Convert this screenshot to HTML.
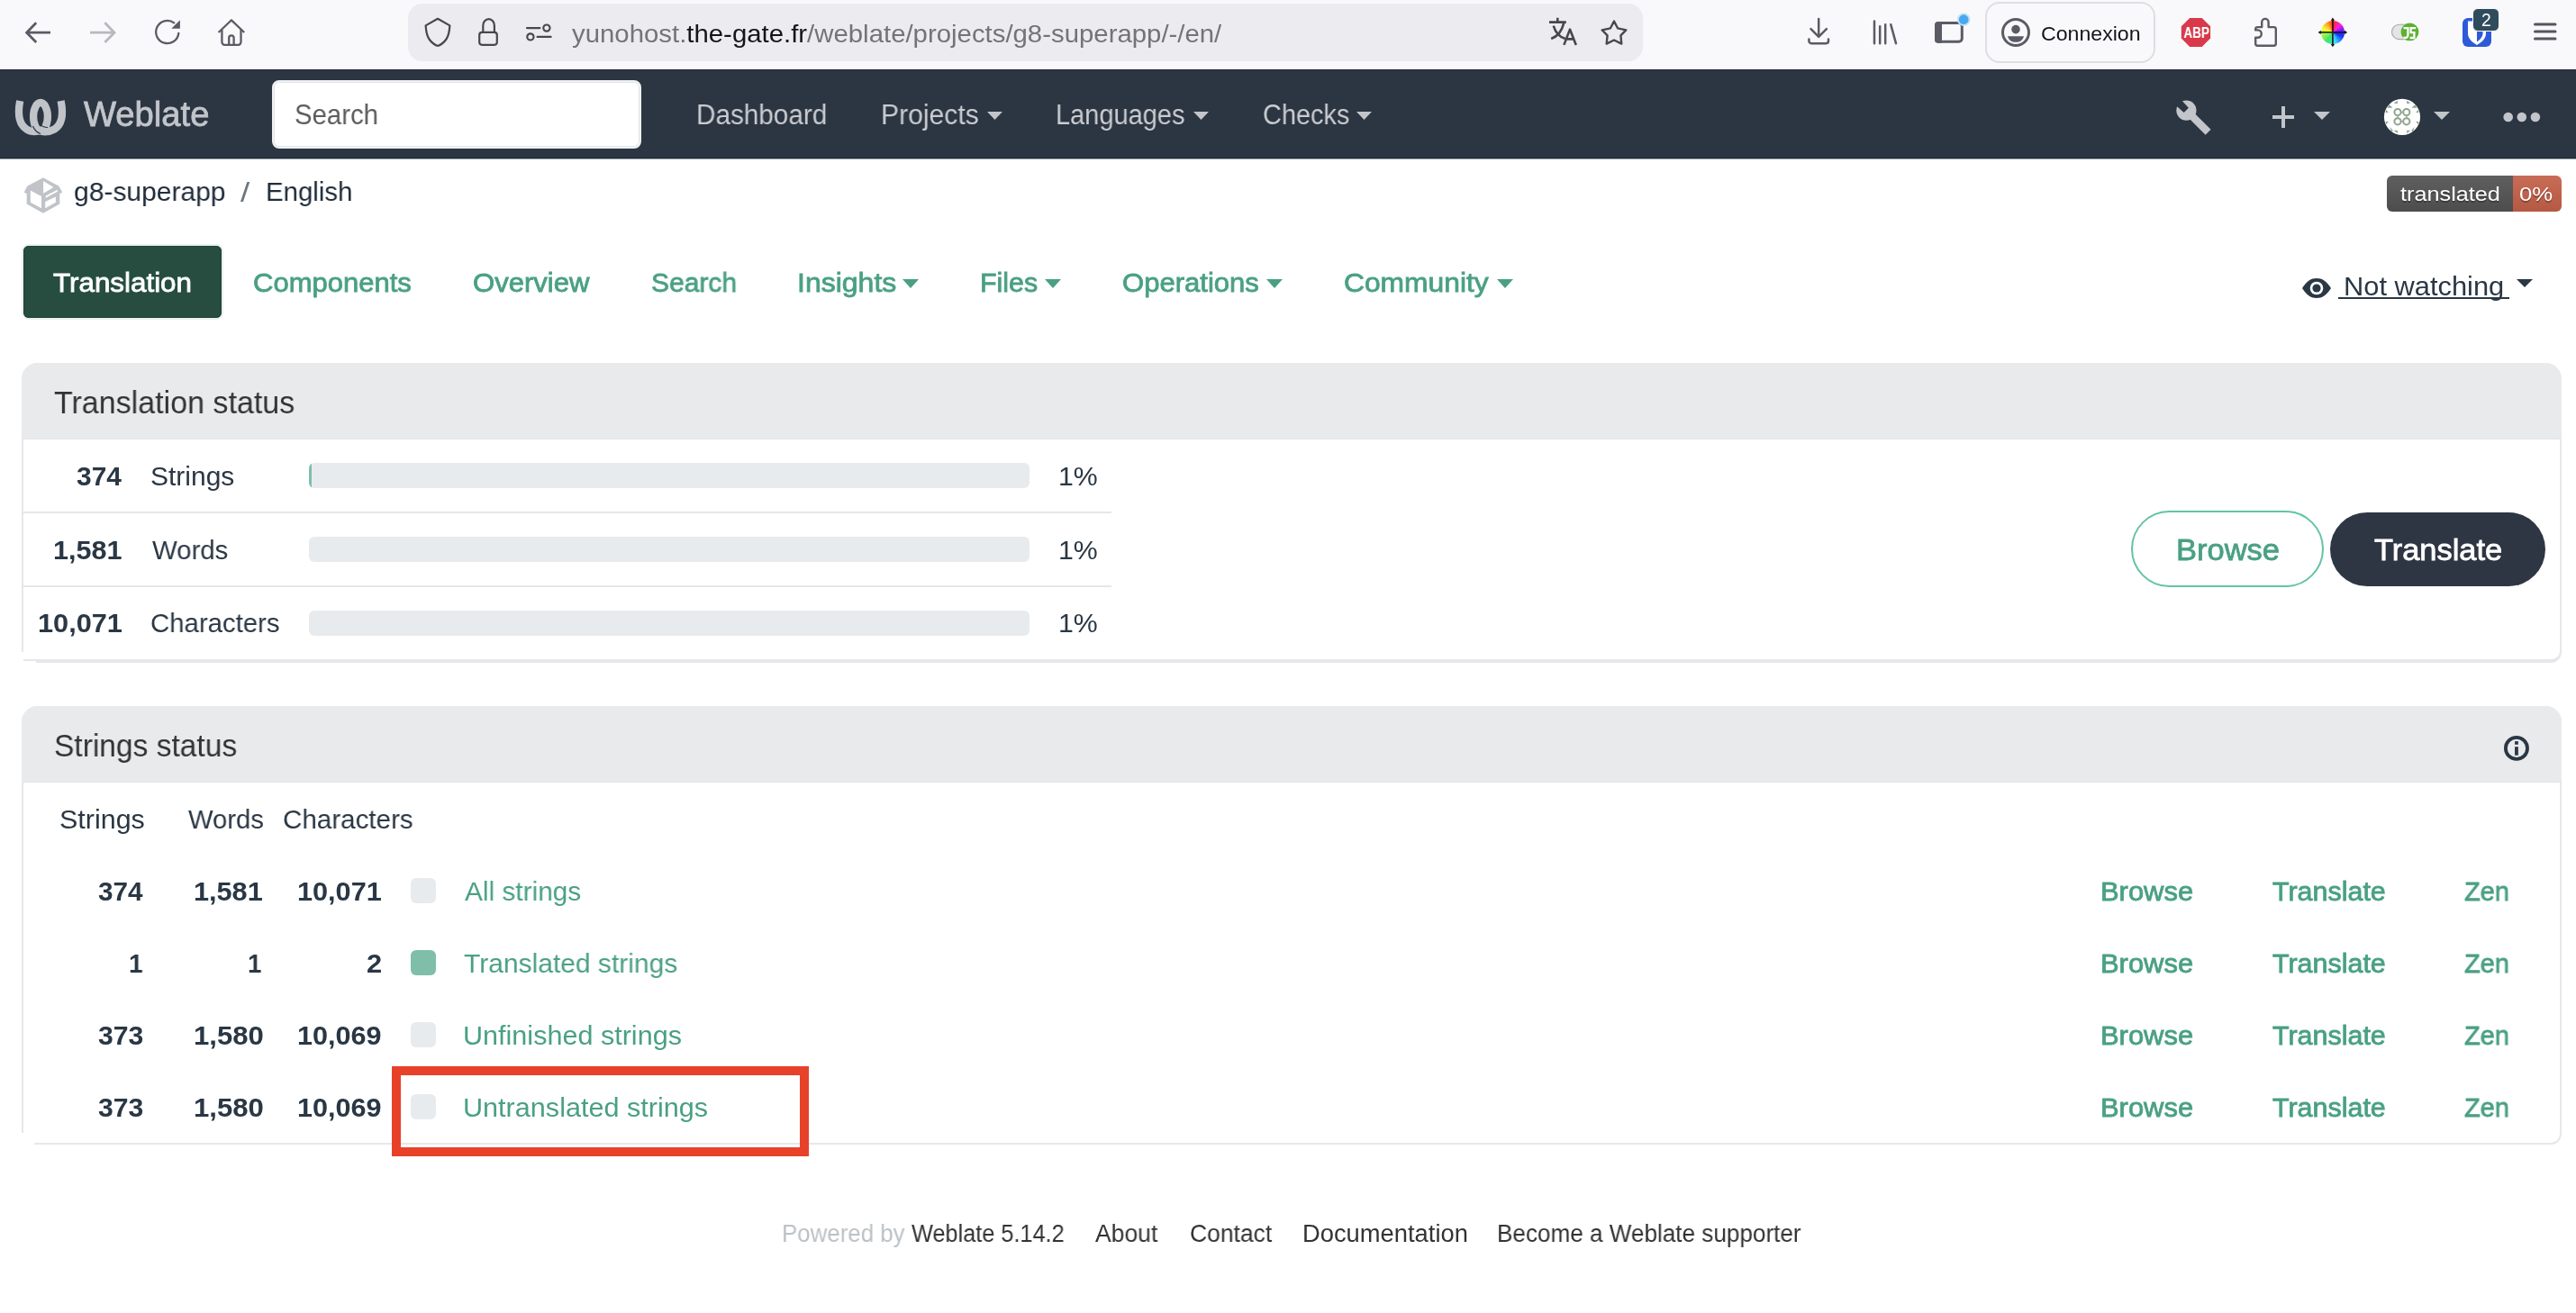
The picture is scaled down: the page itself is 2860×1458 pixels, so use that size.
<!DOCTYPE html>
<html><head><meta charset="utf-8"><title>g8-superapp / English</title>
<style>
html,body{margin:0;padding:0;background:#fff;width:2860px;height:1458px;overflow:hidden;position:relative}
.b{position:absolute;display:block}
.t{position:absolute;white-space:nowrap;line-height:0;will-change:transform;font-family:"Liberation Sans",sans-serif;transform-origin:0 0}
</style></head><body>
<div class="b" style="left:0px;top:0px;width:2860px;height:77px;background:#f9f9fb"></div>
<svg class="b" style="left:20px;top:15px;" width="120" height="45" viewBox="20 15 120 45"><path d="M40.2 25.3 L29.6 36.2 L40.2 47.1 M30 36.2 H56" fill="none" stroke="#5b5b66" stroke-width="2.8"/><path d="M116.4 25.3 L127 36.2 L116.4 47.1 M100 36.2 H126.6" fill="none" stroke="#b8b8bd" stroke-width="2.8"/></svg>
<svg class="b" style="left:165px;top:15px;" width="45" height="45" viewBox="165 15 45 45"><path d="M198.3 36.8 A12.6 12.6 0 1 1 193.2 25.4" fill="none" stroke="#5b5b66" stroke-width="2.3" stroke-linecap="round"/><path d="M190.3 31.8 L199.9 31.8 L199.9 22.3 Z" fill="#5b5b66"/></svg>
<svg class="b" style="left:235px;top:15px;" width="45" height="45" viewBox="235 15 45 45"><path d="M242.6 36 L256.9 22.4 L271.2 36" fill="none" stroke="#5b5b66" stroke-width="2.3" stroke-linejoin="round"/><path d="M246.4 33 V46.8 a3 3 0 0 0 3 3 H264.5 a3 3 0 0 0 3 -3 V33" fill="none" stroke="#5b5b66" stroke-width="2.3"/><path d="M254.2 49.8 V42.1 a2.7 2.7 0 0 1 5.4 0 V49.8" fill="none" stroke="#5b5b66" stroke-width="2.3"/></svg>
<div class="b" style="left:453px;top:4px;width:1371px;height:64px;background:#ececf0;border-radius:16px"></div>
<svg class="b" style="left:460px;top:12px;" width="160" height="48" viewBox="460 12 160 48"><path d="M486 20.8 L472.6 28.4 C473 34 474 40 476.5 43.5 C479 47 483 50 486 51 C489 50 493 47 495.5 43.5 C498 40 499 34 499.4 28.4 Z" fill="none" stroke="#48474f" stroke-width="2.2" stroke-linejoin="round"/><rect x="532.2" y="35.8" width="19.6" height="14" rx="3" fill="none" stroke="#48474f" stroke-width="2.2"/><path d="M536.3 35.8 V28.5 a6.3 7.3 0 0 1 12.6 0 V35.8" fill="none" stroke="#48474f" stroke-width="2.2"/><path d="M585 31.1 H599.4 M596.6 40.9 H611.6" stroke="#48474f" stroke-width="2.2" stroke-linecap="round"/><circle cx="606.9" cy="31.1" r="3.6" fill="none" stroke="#48474f" stroke-width="2.2"/><circle cx="588.9" cy="40.9" r="3.6" fill="none" stroke="#48474f" stroke-width="2.2"/></svg>
<svg class="b" style="left:1700px;top:12px;" width="130" height="48" viewBox="1700 12 130 48"><g fill="none" stroke="#48474f" stroke-width="2.6"><path d="M1720 24.6 H1738.8 M1729.3 19.8 V24.6"/><path d="M1724.7 28.6 C1727 36 1731 41 1737.8 43"/><path d="M1736.2 25.6 C1734 35 1729 40.5 1722.2 43"/><path d="M1736.4 49.9 L1743 32.6 L1749.8 49.9 M1738.6 43.4 H1747.4" stroke-linejoin="round"/></g><path d="M1792 23.5 L1796 31.3 L1805.3 33.3 L1799.4 39.4 L1800.3 48.6 L1792 44.5 L1783.7 48.6 L1784.6 39.4 L1778.7 33.3 L1788 31.3 Z" fill="none" stroke="#48474f" stroke-width="2.4" stroke-linejoin="round"/></svg>
<svg class="b" style="left:1995px;top:12px;" width="200" height="48" viewBox="1995 12 200 48"><g fill="none" stroke="#5b5b66" stroke-width="2.5" stroke-linecap="round" stroke-linejoin="round"><path d="M2019.2 21 V40.5 M2010.5 32.2 L2019.2 40.9 L2027.9 32.2"/><path d="M2008.4 43.5 V45.6 a2.6 2.6 0 0 0 2.6 2.6 H2027.4 a2.6 2.6 0 0 0 2.6 -2.6 V43.5"/><path d="M2081 23.4 V48.2 M2087.2 29.2 V48.2 M2093.2 27.3 V48.2 M2099.3 27.3 L2105 48.2"/></g><rect x="2149.5" y="25.5" width="28.8" height="20.7" rx="3.5" fill="none" stroke="#5b5b66" stroke-width="3"/><rect x="2148" y="24" width="8" height="23.7" rx="3.5" fill="#5b5b66"/><rect x="2151" y="24" width="5" height="23.7" fill="#5b5b66"/><circle cx="2180.2" cy="21.7" r="7.2" fill="#bfe3fb"/><circle cx="2180.2" cy="21.7" r="5.4" fill="#4aa8ee"/></svg>
<div class="b" style="left:2204px;top:2px;width:189px;height:68px;border:2px solid #dedee3;border-radius:16px;box-sizing:border-box"></div>
<svg class="b" style="left:2220px;top:18px;" width="36" height="36" viewBox="0 0 36 36"><circle cx="18" cy="18" r="14.5" fill="none" stroke="#5b5b66" stroke-width="3"/><circle cx="18" cy="14.6" r="4.8" fill="#5b5b66"/><path d="M9 22.2 H27 C26 26.5 22.5 28.8 18 28.8 C13.5 28.8 10 26.5 9 22.2 Z" fill="#5b5b66"/></svg>
<svg class="b" style="left:2410px;top:12px;" width="290" height="48" viewBox="2410 12 290 48"><path d="M2431.2 19.9 H2444.7 L2454.1 29.3 V42.6 L2444.7 52 H2431.2 L2421.8 42.6 V29.3 Z" fill="#d9394a"/><text x="2424.6" y="41.8" textLength="28.2" lengthAdjust="spacingAndGlyphs" font-family="Liberation Sans" font-weight="bold" font-size="15.6" fill="#fff">ABP</text><path d="M2506.2 30.1 H2511.2 V24.6 A3.7 3.7 0 0 1 2518.6 24.6 V30.1 H2524.6 A2.2 2.2 0 0 1 2526.8 32.3 V48.6 A2.2 2.2 0 0 1 2524.6 50.8 H2506.4 A2.2 2.2 0 0 1 2504.2 48.6 V41.8 H2506.6 A4.2 4.2 0 0 0 2506.6 33.4 H2504.2 V32.1 A2 2 0 0 1 2506.2 30.1 Z" fill="none" stroke="#5b5b66" stroke-width="2.4" stroke-linejoin="round"/><rect x="2655.5" y="27.2" width="27" height="16.4" rx="8.2" fill="#e4e4e4" stroke="#a9a9a9" stroke-width="1.1"/><circle cx="2675.5" cy="35.4" r="9.9" fill="#5db131"/><path d="M2668.6 31.2 H2673.4 V39 a3 3 0 0 1 -3 3 H2668.4 M2682.2 31.2 H2676.6 V36.2 H2680.4 V42 H2675.6" fill="none" stroke="#fff" stroke-width="2.3"/></svg>
<div class="b" style="left:2577px;top:23px;width:26px;height:26px;border-radius:50%;background:conic-gradient(from 0deg,#ff2a1a,#ff1ee0 45deg,#6a1cff 80deg,#1030ff 110deg,#3fd8ff 165deg,#3ee860 215deg,#f6ff3a 290deg,#ffa020 330deg,#ff2a1a)"></div>
<svg class="b" style="left:2570px;top:16px;" width="40" height="40" viewBox="2570 16 40 40"><g stroke="#111" stroke-width="1.8" opacity=".85"><path d="M2589.9 21 V50.8 M2575 35.9 H2604.8"/></g><path d="M2587.8 22.8 L2589.9 19.6 L2592 22.8 Z M2587.8 49 L2589.9 52.2 L2592 49 Z M2576.8 33.8 L2573.6 35.9 L2576.8 38 Z M2603 33.8 L2606.2 35.9 L2603 38 Z" fill="#111"/></svg>
<div class="b" style="left:2734px;top:20px;width:32px;height:32px;background:#2d5bd8;border-radius:6px"></div>
<svg class="b" style="left:2738px;top:22px;" width="26" height="30" viewBox="0 0 26 30"><path d="M2 1.5 H22 V15 C22 21 17 25 12 28 C7 25 2 21 2 15 Z" fill="#fff"/><path d="M12 5 H18.5 V15 C18.5 19 15.5 22 12 24.5 Z" fill="#2d5bd8"/></svg>
<div class="b" style="left:2745px;top:9px;width:30px;height:26px;background:#2f4b5c;border-radius:6px;border:1px solid #f9f9fb;box-sizing:border-box"></div>
<svg class="b" style="left:2812px;top:22px;" width="30" height="26" viewBox="0 0 30 26"><path d="M2.5 5 H25 M2.5 13 H25 M2.5 21 H25" stroke="#56555f" stroke-width="3" stroke-linecap="round"/></svg>
<div class="b" style="left:0px;top:77px;width:2860px;height:99px;background:#2c3542;box-shadow:inset 0 1px 0 #1f2a38, inset 0 -1px 0 #1f2a38"></div>
<div class="b" style="left:0px;top:176px;width:2860px;height:1px;background:rgba(31,42,56,.45)"></div>
<svg class="b" style="left:10px;top:100px;" width="80" height="60" viewBox="10 100 80 60"><g fill="none" stroke="#c0c3c8" stroke-width="8.3"><path d="M22.2 112 C19.5 126 21 138 29.5 143.5 C34 146.5 39 146.5 43 145.5"/><ellipse cx="45" cy="129.5" rx="7.9" ry="15.5"/><path d="M67.6 112 C70.5 126 69 138 60.5 143.5 C53 147.5 45 147 40 143"/></g><path d="M36.5 140 C38 144 41 147 45 148.5" fill="none" stroke="#2c3542" stroke-width="1.2"/><path d="M44 137.5 C46 140 49 141.5 53 141.5" fill="none" stroke="#2c3542" stroke-width="1.2"/></svg>
<div class="b" style="left:302px;top:89px;width:410px;height:76px;background:#fff;border:2px solid #eef0f2;box-shadow:inset 0 0 0 1px #e3e6ea;border-radius:8px;box-sizing:border-box"></div>
<svg class="b" style="left:1096px;top:124px;" width="17" height="9" viewBox="0 0 17 9"><path d="M0 0 H17 L8.5 9 Z" fill="#c2c5ca"/></svg>
<svg class="b" style="left:1325px;top:124px;" width="17" height="9" viewBox="0 0 17 9"><path d="M0 0 H17 L8.5 9 Z" fill="#c2c5ca"/></svg>
<svg class="b" style="left:1506px;top:124px;" width="17" height="9" viewBox="0 0 17 9"><path d="M0 0 H17 L8.5 9 Z" fill="#c2c5ca"/></svg>
<svg class="b" style="left:2405px;top:100px;" width="60" height="60" viewBox="2405 100 60 60"><circle cx="2427.4" cy="122.6" r="11.1" fill="#c2c5ca"/><path d="M2427.4 122.6 L2451.6 146.8" stroke="#c2c5ca" stroke-width="8.4" stroke-linecap="butt" stroke-linejoin="round"/><path d="M2424.7 124.9 L2429.9 119.7 L2419.5 108.5 L2412.8 114.6 Z" fill="#2c3542"/></svg>
<svg class="b" style="left:2522px;top:117px;" width="26" height="26" viewBox="0 0 26 26"><path d="M13 1 V25 M1 13 H25" stroke="#c2c5ca" stroke-width="4"/></svg>
<svg class="b" style="left:2569px;top:124px;" width="18" height="9" viewBox="0 0 18 9"><path d="M0 0 H18 L9.0 9 Z" fill="#c2c5ca"/></svg>
<svg class="b" style="left:2640px;top:104px;" width="54" height="52" viewBox="2640 104 54 52"><circle cx="2667" cy="129.9" r="20.1" fill="#fff"/><g fill="#8fa38d"><polygon points="2657.8,114.5 2661.8,111.8 2661.8,115.2"/><polygon points="2676.2,114.5 2672.2,111.8 2672.2,115.2"/><polygon points="2650.5,119.8 2656.6,119.8 2652.5,116.2"/><polygon points="2683.5,119.8 2677.4,119.8 2681.5,116.2"/><polygon points="2648.8,121.4 2651.9,125.0 2648.8,125.0"/><polygon points="2685.2,121.4 2682.1,125.0 2685.2,125.0"/><polygon points="2648.8,134.9 2651.9,134.9 2648.8,138.5"/><polygon points="2685.2,134.9 2682.1,134.9 2685.2,138.5"/><polygon points="2653.2,140.8 2657.0,145.2 2655.0,146.0"/><polygon points="2680.8,140.8 2677.0,145.2 2679.0,146.0"/><polygon points="2657.8,144.8 2661.8,144.8 2661.8,148.3"/><polygon points="2676.2,144.8 2672.2,144.8 2672.2,148.3"/></g><g fill="none" stroke="#8fa38d" stroke-width="2"><circle cx="2662" cy="124.6" r="3.6"/><circle cx="2671.8" cy="124.6" r="3.6"/><circle cx="2662" cy="134.8" r="3.6"/><circle cx="2671.8" cy="134.8" r="3.6"/><path d="M2665.6 124.6 H2668.2 M2665.6 134.8 H2668.2 M2662 128.2 V131.2 M2671.8 128.2 V131.2" stroke-width="1.6" opacity=".7"/></g></svg>
<svg class="b" style="left:2702px;top:124px;" width="18" height="9" viewBox="0 0 18 9"><path d="M0 0 H18 L9.0 9 Z" fill="#c2c5ca"/></svg>
<svg class="b" style="left:2778px;top:123px;" width="44" height="14" viewBox="0 0 44 14"><circle cx="6.7" cy="7" r="5.3" fill="#c2c5ca"/><circle cx="21.8" cy="7" r="5.3" fill="#c2c5ca"/><circle cx="36.9" cy="7" r="5.3" fill="#c2c5ca"/></svg>
<svg class="b" style="left:20px;top:190px;" width="60" height="55" viewBox="20 190 60 55"><path d="M47.9 198 L64.8 207.2 L68.3 213.3 L65.6 214.6 V226.2 L47.9 236 L30.4 226.2 V214.6 L27.6 213.4 L30.8 207.2 Z" fill="#c0c4c9" stroke="#c0c4c9" stroke-width="1.4" stroke-linejoin="round"/><path d="M33.8 211.6 L46 217.9 V231.3 L33.8 224.8 Z M48.1 201.1 L59.4 208 L48.1 214.7 Z M50.8 217.4 L63.8 210.7 V212.8 L50.8 219.7 Z M50.2 223.9 L61.9 218.5 V224.8 L50.2 231.3 Z" fill="#fff"/></svg>
<div class="b" style="left:2650px;top:195px;width:194px;height:40px;border-radius:6px;overflow:hidden;background:linear-gradient(to right,#555 0,#555 139.8px,#c9634b 139.8px,#c9634b 100%)"></div>
<div class="b" style="left:2650px;top:195px;width:194px;height:40px;border-radius:6px;background:linear-gradient(rgba(187,187,187,.1),rgba(0,0,0,.1))"></div>
<div class="b" style="left:24px;top:271px;width:224px;height:84px;background:#eceef0;border-radius:8px"></div>
<div class="b" style="left:26px;top:273px;width:220px;height:80px;background:#264d40;border-radius:6px;box-shadow:inset 0 0 0 1px #1c4435"></div>
<svg class="b" style="left:1002px;top:310px;" width="18" height="10" viewBox="0 0 18 10"><path d="M0 0 H18 L9.0 10 Z" fill="#4aa084"/></svg>
<svg class="b" style="left:1160px;top:310px;" width="18" height="10" viewBox="0 0 18 10"><path d="M0 0 H18 L9.0 10 Z" fill="#4aa084"/></svg>
<svg class="b" style="left:1406px;top:310px;" width="18" height="10" viewBox="0 0 18 10"><path d="M0 0 H18 L9.0 10 Z" fill="#4aa084"/></svg>
<svg class="b" style="left:1662px;top:310px;" width="18" height="10" viewBox="0 0 18 10"><path d="M0 0 H18 L9.0 10 Z" fill="#4aa084"/></svg>
<svg class="b" style="left:2555px;top:308px;" width="34" height="24" viewBox="0 0 34 24"><path d="M1 12 C6 4 11 1 17 1 C23 1 28 4 33 12 C28 20 23 23 17 23 C11 23 6 20 1 12 Z" fill="#2a3744"/><circle cx="17" cy="12" r="7.3" fill="#fff"/><circle cx="17" cy="12" r="4.6" fill="#2a3744"/></svg>
<div class="b" style="left:2596px;top:329.5px;width:190px;height:2.5px;background:#2a3744"></div>
<svg class="b" style="left:2794px;top:310px;" width="18" height="9" viewBox="0 0 18 9"><path d="M0 0 H18 L9.0 9 Z" fill="#2a3744"/></svg>
<div class="b" style="left:24px;top:403px;width:2820px;height:333px;border:2px solid #e6e7ea;border-bottom-width:4px;border-radius:18px 18px 12px 12px;box-sizing:border-box;background:#fff"></div>
<div class="b" style="left:24px;top:403px;width:2820px;height:85px;background:#e9eaec;border-radius:18px 18px 0 0;box-shadow:inset 0 -1px 0 #e4e5e8"></div>
<div class="b" style="left:26px;top:567.5px;width:1208px;height:2.0px;background:#e5e7ea"></div>
<div class="b" style="left:26px;top:650px;width:1208px;height:2px;background:#e5e7ea"></div>
<div class="b" style="left:343px;top:514px;width:800px;height:28px;background:#e8ebee;border-radius:6px"></div>
<div class="b" style="left:343px;top:596px;width:800px;height:28px;background:#e8ebee;border-radius:6px"></div>
<div class="b" style="left:343px;top:678px;width:800px;height:28px;background:#e8ebee;border-radius:6px"></div>
<div class="b" style="left:343px;top:514px;width:800px;height:28px;border-radius:6px;overflow:hidden;background:linear-gradient(to right,#7fbfaa 0,#7fbfaa 3px,transparent 3px)"></div>
<div class="b" style="left:2366px;top:567px;width:214px;height:85px;border:2.5px solid #62c4a3;border-radius:43px;box-sizing:border-box"></div>
<div class="b" style="left:2587px;top:569px;width:239px;height:82px;background:#2d3642;border-radius:41px"></div>
<div class="b" style="left:24px;top:784px;width:2820px;height:487px;border:2px solid #e6e7ea;border-radius:18px 18px 12px 12px;box-sizing:border-box;background:#fff"></div>
<div class="b" style="left:24px;top:784px;width:2820px;height:85px;background:#e9eaec;border-radius:18px 18px 0 0;box-shadow:inset 0 -1px 0 #e4e5e8"></div>
<svg class="b" style="left:2770px;top:806px;" width="50" height="50" viewBox="2770 806 50 50"><circle cx="2793.95" cy="830.9" r="12.05" fill="none" stroke="#2a3744" stroke-width="3.8"/><rect x="2792.05" y="823.1" width="3.8" height="3.7" fill="#2a3744"/><rect x="2792.05" y="829.2" width="3.8" height="9.5" fill="#2a3744"/></svg>
<div class="b" style="left:456px;top:975px;width:28px;height:28px;background:#e8ebee;border-radius:6px"></div>
<div class="b" style="left:456px;top:1055px;width:28px;height:28px;background:#7fbfaa;border-radius:6px"></div>
<div class="b" style="left:456px;top:1135px;width:28px;height:28px;background:#e8ebee;border-radius:6px"></div>
<div class="b" style="left:456px;top:1215px;width:28px;height:28px;background:#e8ebee;border-radius:6px"></div>
<div class="b" style="left:22px;top:724px;width:4px;height:13px;background:#fff"></div>
<div class="b" style="left:26px;top:724px;width:14px;height:13px;background:linear-gradient(to bottom,#fff 0,#fff 8px,#e6e7ea 8px,#e6e7ea 10px,#fff 10px)"></div>
<div class="b" style="left:22px;top:1258px;width:16px;height:15px;background:#fff"></div>
<div class="b" style="left:435px;top:1184px;width:463px;height:100px;border:10px solid #e8412a;box-sizing:border-box"></div>
<span class="t" style="left:634.90px;top:38.00px;font-size:27.652px;font-weight:400;color:#737378;transform:scaleX(1.0620);"><span style="color:#737378">yunohost.</span><span style="color:#15141a">the-gate.fr</span><span style="color:#737378">/weblate/projects/g8-superapp/-/en/</span></span>
<span class="t" style="left:2265.55px;top:38.00px;font-size:22.093px;font-weight:400;color:#15141a;transform:scaleX(1.0476);">Connexion</span>
<span class="t" style="left:2754.62px;top:23.00px;font-size:19.331px;font-weight:400;color:#ffffff;transform:scaleX(0.9778);">2</span>
<span class="t" style="left:93.00px;top:127.00px;font-size:37.936px;font-weight:400;-webkit-text-stroke:0.8px #c2c5ca;color:#c2c5ca;transform:scaleX(1.0073);">Weblate</span>
<span class="t" style="left:327.09px;top:128.00px;font-size:30.741px;font-weight:400;color:#5c5c5c;transform:scaleX(0.9548);">Search</span>
<span class="t" style="left:772.76px;top:127.00px;font-size:30.669px;font-weight:400;color:#c9ccd0;transform:scaleX(0.9685);">Dashboard</span>
<span class="t" style="left:977.84px;top:127.00px;font-size:30.669px;font-weight:400;color:#c9ccd0;transform:scaleX(0.9815);">Projects</span>
<span class="t" style="left:1172.41px;top:127.00px;font-size:30.669px;font-weight:400;color:#c9ccd0;transform:scaleX(0.9456);">Languages</span>
<span class="t" style="left:1401.82px;top:127.00px;font-size:30.669px;font-weight:400;color:#c9ccd0;transform:scaleX(0.9424);">Checks</span>
<span class="t" style="left:82.31px;top:213.00px;font-size:30.378px;font-weight:400;color:#212d3b;transform:scaleX(0.9887);">g8-superapp</span>
<span class="t" style="left:267.30px;top:214.00px;font-size:30.378px;font-weight:400;color:#6c757d;transform:scaleX(1.2125);">/</span>
<span class="t" style="left:294.56px;top:213.00px;font-size:30.378px;font-weight:400;color:#212d3b;transform:scaleX(0.9677);">English</span>
<span class="t" style="left:2665.00px;top:215.00px;font-size:22.771px;font-weight:400;color:#ffffff;transform:scaleX(1.1092);text-shadow:0 2px 0 rgba(1,1,1,.3)">translated</span>
<span class="t" style="left:2797.27px;top:215.00px;font-size:22.771px;font-weight:400;color:#ffffff;transform:scaleX(1.1290);text-shadow:0 2px 0 rgba(1,1,1,.3)">0%</span>
<span class="t" style="left:59.40px;top:314.00px;font-size:30.233px;font-weight:400;-webkit-text-stroke:0.8px #ffffff;color:#ffffff;transform:scaleX(1.0381);">Translation</span>
<span class="t" style="left:281.27px;top:314.00px;font-size:30.233px;font-weight:400;-webkit-text-stroke:0.8px #4aa084;color:#4aa084;transform:scaleX(1.0259);">Components</span>
<span class="t" style="left:524.87px;top:314.00px;font-size:30.233px;font-weight:400;-webkit-text-stroke:0.8px #4aa084;color:#4aa084;transform:scaleX(1.0280);">Overview</span>
<span class="t" style="left:723.31px;top:314.00px;font-size:30.233px;font-weight:400;-webkit-text-stroke:0.8px #4aa084;color:#4aa084;transform:scaleX(0.9925);">Search</span>
<span class="t" style="left:884.58px;top:314.00px;font-size:30.233px;font-weight:400;-webkit-text-stroke:0.8px #4aa084;color:#4aa084;transform:scaleX(1.0594);">Insights</span>
<span class="t" style="left:1087.89px;top:314.00px;font-size:30.233px;font-weight:400;-webkit-text-stroke:0.8px #4aa084;color:#4aa084;transform:scaleX(1.0049);">Files</span>
<span class="t" style="left:1246.27px;top:314.00px;font-size:30.233px;font-weight:400;-webkit-text-stroke:0.8px #4aa084;color:#4aa084;transform:scaleX(1.0274);">Operations</span>
<span class="t" style="left:1492.15px;top:314.00px;font-size:30.233px;font-weight:400;-webkit-text-stroke:0.8px #4aa084;color:#4aa084;transform:scaleX(1.0513);">Community</span>
<span class="t" style="left:2602.45px;top:318.00px;font-size:30.087px;font-weight:400;color:#2a3744;transform:scaleX(1.0253);">Not watching</span>
<span class="t" style="left:60.02px;top:447.00px;font-size:34.593px;font-weight:400;color:#333333;transform:scaleX(0.9840);">Translation status</span>
<span class="t" style="left:85.38px;top:529.00px;font-size:29.360px;font-weight:700;color:#2a3744;transform:scaleX(1.0188);">374</span>
<span class="t" style="left:167.39px;top:529.00px;font-size:29.797px;font-weight:400;color:#2a3744;transform:scaleX(1.0067);">Strings</span>
<span class="t" style="left:1174.74px;top:529.00px;font-size:29.360px;font-weight:400;color:#2a3744;transform:scaleX(1.0308);">1%</span>
<span class="t" style="left:58.62px;top:611.00px;font-size:29.360px;font-weight:700;color:#2a3744;transform:scaleX(1.0408);">1,581</span>
<span class="t" style="left:168.80px;top:611.00px;font-size:29.797px;font-weight:400;color:#2a3744;transform:scaleX(0.9869);">Words</span>
<span class="t" style="left:1174.74px;top:611.00px;font-size:29.360px;font-weight:400;color:#2a3744;transform:scaleX(1.0308);">1%</span>
<span class="t" style="left:41.51px;top:692.00px;font-size:29.360px;font-weight:700;color:#2a3744;transform:scaleX(1.0460);">10,071</span>
<span class="t" style="left:167.03px;top:692.00px;font-size:29.797px;font-weight:400;color:#2a3744;transform:scaleX(0.9860);">Characters</span>
<span class="t" style="left:1174.74px;top:692.00px;font-size:29.360px;font-weight:400;color:#2a3744;transform:scaleX(1.0308);">1%</span>
<span class="t" style="left:2415.67px;top:610.00px;font-size:34.012px;font-weight:400;-webkit-text-stroke:0.8px #4aa084;color:#4aa084;transform:scaleX(1.0145);">Browse</span>
<span class="t" style="left:2636.30px;top:610.00px;font-size:34.012px;font-weight:400;-webkit-text-stroke:0.8px #ffffff;color:#ffffff;transform:scaleX(1.0122);">Translate</span>
<span class="t" style="left:59.66px;top:828.00px;font-size:34.593px;font-weight:400;color:#333333;transform:scaleX(0.9699);">Strings status</span>
<span class="t" style="left:66.19px;top:910.00px;font-size:30.378px;font-weight:400;color:#2a3744;transform:scaleX(1.0033);">Strings</span>
<span class="t" style="left:208.50px;top:910.00px;font-size:30.378px;font-weight:400;color:#2a3744;transform:scaleX(0.9628);">Words</span>
<span class="t" style="left:313.55px;top:910.00px;font-size:30.378px;font-weight:400;color:#2a3744;transform:scaleX(0.9745);">Characters</span>
<span class="t" style="left:109.09px;top:990.00px;font-size:29.360px;font-weight:700;color:#2a3744;transform:scaleX(1.0104);">374</span>
<span class="t" style="left:214.61px;top:990.00px;font-size:29.360px;font-weight:700;color:#2a3744;transform:scaleX(1.0437);">1,581</span>
<span class="t" style="left:330.11px;top:990.00px;font-size:29.360px;font-weight:700;color:#2a3744;transform:scaleX(1.0437);">10,071</span>
<span class="t" style="left:516.00px;top:990.00px;font-size:30.087px;font-weight:400;color:#4aa084;transform:scaleX(0.9915);">All strings</span>
<span class="t" style="left:2332.24px;top:990.00px;font-size:30.087px;font-weight:400;-webkit-text-stroke:0.8px #4aa084;color:#4aa084;transform:scaleX(1.0278);">Browse</span>
<span class="t" style="left:2522.70px;top:990.00px;font-size:30.087px;font-weight:400;-webkit-text-stroke:0.8px #4aa084;color:#4aa084;transform:scaleX(1.0122);">Translate</span>
<span class="t" style="left:2735.90px;top:990.00px;font-size:30.087px;font-weight:400;-webkit-text-stroke:0.8px #4aa084;color:#4aa084;transform:scaleX(0.9660);">Zen</span>
<span class="t" style="left:143.09px;top:1070.00px;font-size:29.360px;font-weight:700;color:#2a3744;transform:scaleX(0.9571);">1</span>
<span class="t" style="left:275.41px;top:1070.00px;font-size:29.360px;font-weight:700;color:#2a3744;transform:scaleX(0.9429);">1</span>
<span class="t" style="left:407.25px;top:1070.00px;font-size:29.360px;font-weight:700;color:#2a3744;transform:scaleX(1.0500);">2</span>
<span class="t" style="left:515.00px;top:1070.00px;font-size:30.087px;font-weight:400;color:#4aa084;transform:scaleX(0.9970);">Translated strings</span>
<span class="t" style="left:2332.24px;top:1070.00px;font-size:30.087px;font-weight:400;-webkit-text-stroke:0.8px #4aa084;color:#4aa084;transform:scaleX(1.0278);">Browse</span>
<span class="t" style="left:2522.70px;top:1070.00px;font-size:30.087px;font-weight:400;-webkit-text-stroke:0.8px #4aa084;color:#4aa084;transform:scaleX(1.0122);">Translate</span>
<span class="t" style="left:2735.90px;top:1070.00px;font-size:30.087px;font-weight:400;-webkit-text-stroke:0.8px #4aa084;color:#4aa084;transform:scaleX(0.9660);">Zen</span>
<span class="t" style="left:109.07px;top:1150.00px;font-size:29.360px;font-weight:700;color:#2a3744;transform:scaleX(1.0277);">373</span>
<span class="t" style="left:214.68px;top:1150.00px;font-size:29.360px;font-weight:700;color:#2a3744;transform:scaleX(1.0600);">1,580</span>
<span class="t" style="left:330.32px;top:1150.00px;font-size:29.360px;font-weight:700;color:#2a3744;transform:scaleX(1.0414);">10,069</span>
<span class="t" style="left:513.97px;top:1150.00px;font-size:30.087px;font-weight:400;color:#4aa084;transform:scaleX(1.0161);">Unfinished strings</span>
<span class="t" style="left:2332.24px;top:1150.00px;font-size:30.087px;font-weight:400;-webkit-text-stroke:0.8px #4aa084;color:#4aa084;transform:scaleX(1.0278);">Browse</span>
<span class="t" style="left:2522.70px;top:1150.00px;font-size:30.087px;font-weight:400;-webkit-text-stroke:0.8px #4aa084;color:#4aa084;transform:scaleX(1.0122);">Translate</span>
<span class="t" style="left:2735.90px;top:1150.00px;font-size:30.087px;font-weight:400;-webkit-text-stroke:0.8px #4aa084;color:#4aa084;transform:scaleX(0.9660);">Zen</span>
<span class="t" style="left:109.07px;top:1230.00px;font-size:29.360px;font-weight:700;color:#2a3744;transform:scaleX(1.0277);">373</span>
<span class="t" style="left:214.68px;top:1230.00px;font-size:29.360px;font-weight:700;color:#2a3744;transform:scaleX(1.0600);">1,580</span>
<span class="t" style="left:330.32px;top:1230.00px;font-size:29.360px;font-weight:700;color:#2a3744;transform:scaleX(1.0414);">10,069</span>
<span class="t" style="left:513.97px;top:1230.00px;font-size:30.087px;font-weight:400;color:#4aa084;transform:scaleX(1.0174);">Untranslated strings</span>
<span class="t" style="left:2332.24px;top:1230.00px;font-size:30.087px;font-weight:400;-webkit-text-stroke:0.8px #4aa084;color:#4aa084;transform:scaleX(1.0278);">Browse</span>
<span class="t" style="left:2522.70px;top:1230.00px;font-size:30.087px;font-weight:400;-webkit-text-stroke:0.8px #4aa084;color:#4aa084;transform:scaleX(1.0122);">Translate</span>
<span class="t" style="left:2735.90px;top:1230.00px;font-size:30.087px;font-weight:400;-webkit-text-stroke:0.8px #4aa084;color:#4aa084;transform:scaleX(0.9660);">Zen</span>
<span class="t" style="left:867.87px;top:1370.00px;font-size:26.744px;font-weight:400;color:#bcc1c6;transform:scaleX(0.9669);">Powered by</span>
<span class="t" style="left:1011.90px;top:1370.00px;font-size:26.744px;font-weight:400;color:#333333;transform:scaleX(0.9461);">Weblate 5.14.2</span>
<span class="t" style="left:1216.20px;top:1370.00px;font-size:26.744px;font-weight:400;color:#333333;transform:scaleX(0.9914);">About</span>
<span class="t" style="left:1320.71px;top:1370.00px;font-size:26.744px;font-weight:400;color:#333333;transform:scaleX(0.9901);">Contact</span>
<span class="t" style="left:1445.85px;top:1370.00px;font-size:26.744px;font-weight:400;color:#333333;transform:scaleX(1.0227);">Documentation</span>
<span class="t" style="left:1662.45px;top:1370.00px;font-size:26.744px;font-weight:400;color:#333333;transform:scaleX(0.9764);">Become a Weblate supporter</span>
</body></html>
